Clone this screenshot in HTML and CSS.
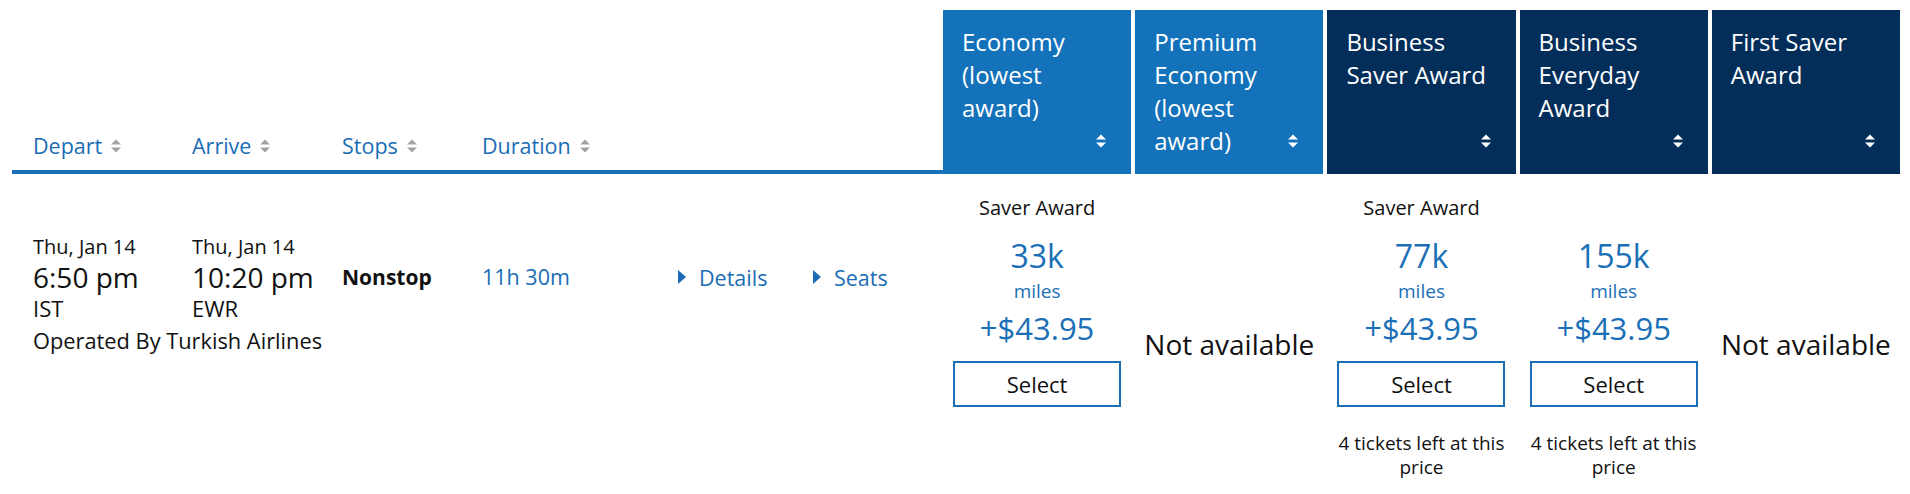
FILE: index.html
```html
<!DOCTYPE html>
<html lang="en">
<head>
    <meta charset="UTF-8">
    <meta name="viewport" content="width=device-width, initial-scale=1.0">
    <title>Award Results</title>
    <link rel="stylesheet" href="styles.css">
</head>
<body>
    <div class="results">
        <div class="head-row">
            <div class="flight-head">
                <span class="sort-link">Depart
                    <svg class="sort-icon" viewBox="0 0 10 14"><path d="M0 5.5L5 0.5L10 5.5Z M0 8.5L10 8.5L5 13.5Z"/></svg>
                </span>
                <span class="sort-link">Arrive
                    <svg class="sort-icon" viewBox="0 0 10 14"><path d="M0 5.5L5 0.5L10 5.5Z M0 8.5L10 8.5L5 13.5Z"/></svg>
                </span>
                <span class="sort-link">Stops
                    <svg class="sort-icon" viewBox="0 0 10 14"><path d="M0 5.5L5 0.5L10 5.5Z M0 8.5L10 8.5L5 13.5Z"/></svg>
                </span>
                <span class="sort-link">Duration
                    <svg class="sort-icon" viewBox="0 0 10 14"><path d="M0 5.5L5 0.5L10 5.5Z M0 8.5L10 8.5L5 13.5Z"/></svg>
                </span>
            </div>
            <div class="fare-heads">
                <div class="fare-head light">
                    <span class="fare-title">Economy (lowest award)</span>
                    <svg class="sort-icon" viewBox="0 0 10 14"><path d="M0 5.5L5 0.5L10 5.5Z M0 8.5L10 8.5L5 13.5Z"/></svg>
                </div>
                <div class="fare-head light">
                    <span class="fare-title">Premium Economy (lowest award)</span>
                    <svg class="sort-icon" viewBox="0 0 10 14"><path d="M0 5.5L5 0.5L10 5.5Z M0 8.5L10 8.5L5 13.5Z"/></svg>
                </div>
                <div class="fare-head dark">
                    <span class="fare-title">Business Saver Award</span>
                    <svg class="sort-icon" viewBox="0 0 10 14"><path d="M0 5.5L5 0.5L10 5.5Z M0 8.5L10 8.5L5 13.5Z"/></svg>
                </div>
                <div class="fare-head dark">
                    <span class="fare-title">Business Everyday Award</span>
                    <svg class="sort-icon" viewBox="0 0 10 14"><path d="M0 5.5L5 0.5L10 5.5Z M0 8.5L10 8.5L5 13.5Z"/></svg>
                </div>
                <div class="fare-head dark">
                    <span class="fare-title">First Saver Award</span>
                    <svg class="sort-icon" viewBox="0 0 10 14"><path d="M0 5.5L5 0.5L10 5.5Z M0 8.5L10 8.5L5 13.5Z"/></svg>
                </div>
            </div>
        </div>

        <div class="flight-row">
            <div class="flight-info">
                <div class="time-block">
                    <div class="date">Thu, Jan 14</div>
                    <div class="time">6:50 pm</div>
                    <div class="airport">IST</div>
                </div>
                <div class="time-block">
                    <div class="date">Thu, Jan 14</div>
                    <div class="time">10:20 pm</div>
                    <div class="airport">EWR</div>
                </div>
                <div class="stops">Nonstop</div>
                <div class="duration">11h 30m</div>
                <a class="toggle-link" href="#">
                    <svg class="caret" viewBox="0 0 8 14"><path d="M0 0L8 7L0 14Z"/></svg>Details
                </a>
                <a class="toggle-link" href="#">
                    <svg class="caret" viewBox="0 0 8 14"><path d="M0 0L8 7L0 14Z"/></svg>Seats
                </a>
                <div class="operated">Operated By Turkish Airlines</div>
            </div>
            <div class="fares">
                <div class="fare">
                    <div class="fare-type">Saver Award</div>
                    <div class="miles-amount">33k</div>
                    <div class="miles-unit">miles</div>
                    <div class="taxes">+$43.95</div>
                    <button type="button" class="select-btn">Select</button>
                </div>
                <div class="fare na">Not available</div>
                <div class="fare">
                    <div class="fare-type">Saver Award</div>
                    <div class="miles-amount">77k</div>
                    <div class="miles-unit">miles</div>
                    <div class="taxes">+$43.95</div>
                    <button type="button" class="select-btn">Select</button>
                    <div class="seats-left">4 tickets left at this price</div>
                </div>
                <div class="fare">
                    <div class="fare-type"></div>
                    <div class="miles-amount">155k</div>
                    <div class="miles-unit">miles</div>
                    <div class="taxes">+$43.95</div>
                    <button type="button" class="select-btn">Select</button>
                    <div class="seats-left">4 tickets left at this price</div>
                </div>
                <div class="fare na">Not available</div>
            </div>
        </div>
    </div>
</body>
</html>
```

FILE: styles.css
```css
body {
    margin: 0;
    font-family: "Open Sans", "Liberation Sans", sans-serif;
    background-color: #fff;
    color: #111;
}
.results {
    padding: 10px 10px 0 12px;
}
.head-row,
.flight-row {
    display: flex;
}

/* left column headers */
.flight-head {
    flex: 1;
    display: grid;
    grid-template-columns: 159px 150px 140px 196px;
    align-items: end;
    padding: 0 0 9px 21px;
    border-bottom: 4px solid #1a70b8;
}
.sort-link {
    display: inline-flex;
    align-items: center;
    gap: 9px;
    color: #1a6db4;
    font-size: 21.5px;
    line-height: 30px;
    cursor: pointer;
}
.sort-icon {
    width: 10px;
    height: 14px;
    fill: #a3a3a3;
}

/* fare column headers */
.fare-heads,
.fares {
    width: 957px;
    display: grid;
    grid-template-columns: repeat(5, 1fr);
    column-gap: 4px;
}
.fare-head {
    display: grid;
    padding: 15px 20px 17px 19px;
    color: #fff;
    font-size: 24px;
    line-height: 33px;
}
.fare-head.light {
    background-color: #1372b9;
}
.fare-head.dark {
    background-color: #032e5a;
}
.fare-title,
.fare-head .sort-icon {
    grid-area: 1 / 1;
}
.fare-head .sort-icon {
    justify-self: end;
    align-self: end;
    margin: 0 5px 9px 0;
    fill: #fff;
}

/* flight row */
.flight-info {
    flex: 1;
    display: grid;
    grid-template-columns: 159px 150px 140px 196px 135px auto;
    align-content: start;
    padding: 60px 0 0 21px;
}
.date {
    font-size: 20px;
    line-height: 26px;
}
.time {
    font-size: 28px;
    line-height: 34px;
}
.airport {
    font-size: 22px;
    line-height: 28px;
}
.stops,
.duration {
    padding-top: 26px;
    font-size: 21px;
    line-height: 34px;
}
.stops {
    font-weight: 700;
}
.duration {
    color: #1a6db4;
    font-size: 21.5px;
}
.toggle-link {
    display: flex;
    align-items: center;
    gap: 13px;
    align-self: start;
    height: 34px;
    margin-top: 26px;
    color: #1a6db4;
    font-size: 21.5px;
    text-decoration: none;
}
.caret {
    width: 8px;
    height: 14px;
    fill: #1a6db4;
}
.operated {
    grid-column: 1 / -1;
    margin-top: 5px;
    font-size: 21.8px;
    line-height: 28px;
}

/* fare cells */
.fare {
    display: flex;
    flex-direction: column;
    align-items: center;
    padding: 21px 0 33px;
    text-align: center;
}
.fare.na {
    justify-content: center;
    padding-top: 35px;
    font-size: 28px;
    line-height: 36px;
}
.fare-type {
    min-height: 26px;
    font-size: 20px;
    line-height: 26px;
}
.miles-amount {
    margin-top: 20px;
    color: #1a6fb6;
    font-size: 32px;
    line-height: 30px;
}
.miles-unit {
    margin-top: 9px;
    color: #1a6fb6;
    font-size: 19px;
    line-height: 22px;
}
.taxes {
    margin-top: 7px;
    color: #1a6fb6;
    font-size: 31px;
    line-height: 38px;
}
.select-btn {
    margin-top: 14px;
    width: 168px;
    height: 46px;
    border: 2px solid #1a6fb6;
    background: #fff;
    color: #111;
    font-family: "Open Sans", "Liberation Sans", sans-serif;
    font-size: 22px;
    cursor: pointer;
}
.seats-left {
    margin-top: 24px;
    font-size: 19px;
    line-height: 24px;
}
```
